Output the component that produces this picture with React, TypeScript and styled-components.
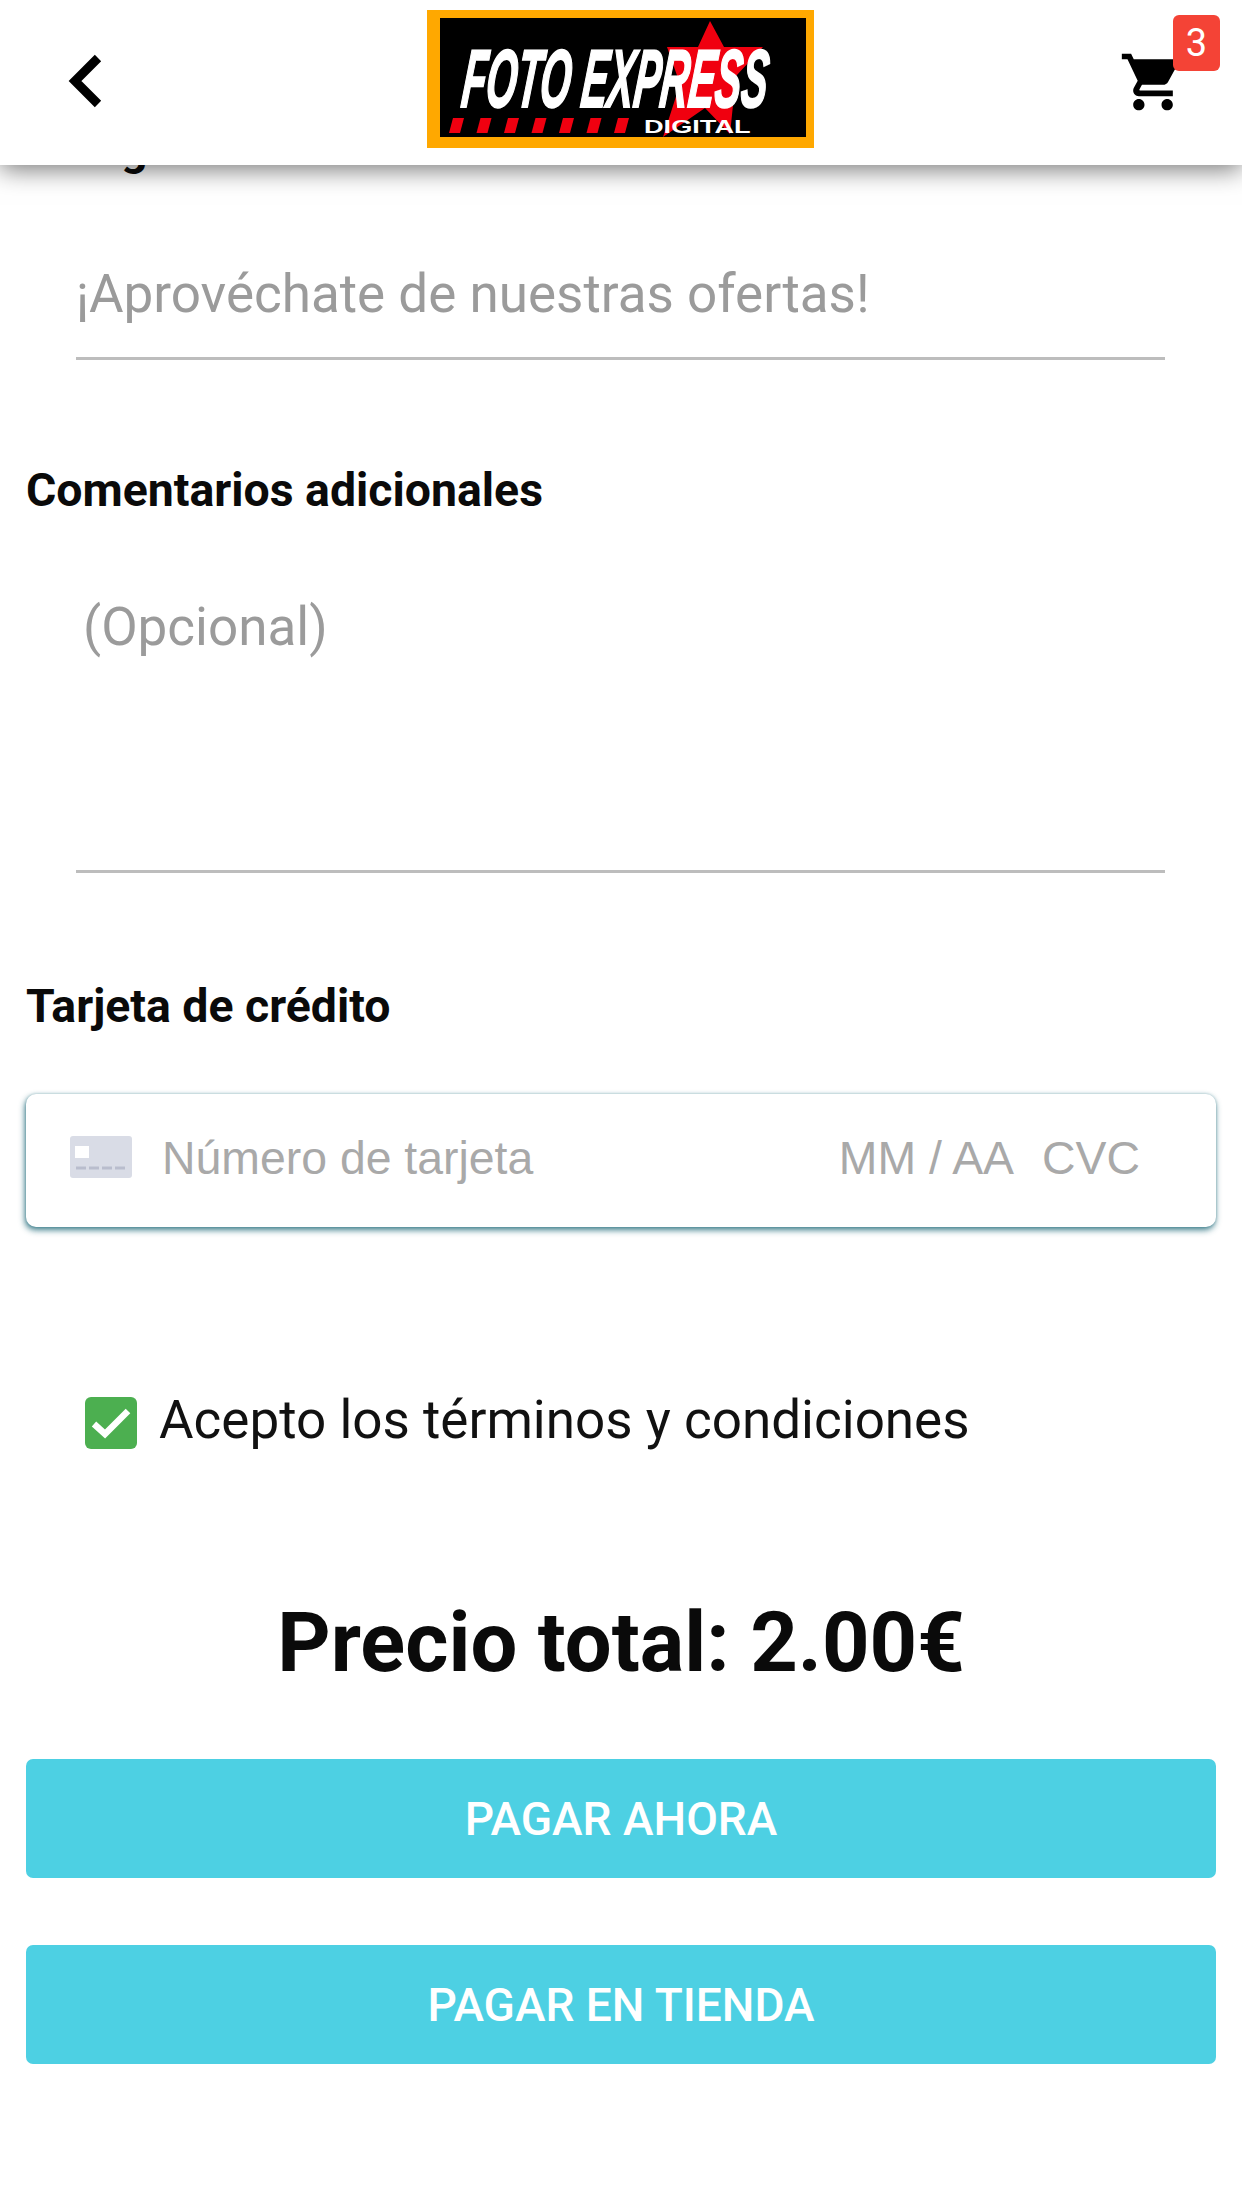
import React from 'react';
import styled, { createGlobalStyle } from 'styled-components';

const GlobalStyle = createGlobalStyle`
  html, body {
    margin: 0;
    padding: 0;
    background: #fff;
    font-family: Roboto, "Liberation Sans", sans-serif;
  }
`;

const Page = styled.div`
  position: relative;
  width: 1242px;
  height: 2208px;
  overflow: hidden;
  background: #fff;
`;

const Header = styled.header`
  position: absolute;
  top: 0;
  left: 0;
  right: 0;
  z-index: 2;
  height: 165px;
  background: #fff;
  box-shadow: 0 4px 24px rgba(0, 0, 0, 0.55);
  display: grid;
  grid-template-columns: 1fr 387px 1fr;
  align-items: center;
`;

const BackButton = styled.button`
  border: 0;
  background: none;
  padding: 0;
  width: 50px;
  height: 60px;
  margin: 0 0 4px 60px;
`;

const Logo = styled.div`
  height: 138px;
  margin: 0 1px 7px -1px;
  box-sizing: border-box;
  border: solid #ffa800;
  border-width: 8px 8px 11px 13px;
  background: #000;
  overflow: hidden;
`;

const CartButton = styled.div`
  position: relative;
  justify-self: end;
  width: 110px;
  height: 100px;
  margin-right: 22px;
`;

const CartBadge = styled.span`
  position: absolute;
  top: -18px;
  right: 0;
  width: 47px;
  height: 56px;
  border-radius: 6px;
  background: #f44336;
  color: #fff;
  font-size: 38px;
  display: flex;
  align-items: center;
  justify-content: center;
`;

const CartIcon = styled.svg`
  position: absolute;
  left: 9px;
  top: 15px;
  width: 68px;
  height: 68px;
`;

const Content = styled.main`
  padding: 122px 26px 0;
`;

const Label = styled.div<{ $top: number }>`
  margin-top: ${(p) => p.$top}px;
  font-size: 46.4px;
  font-weight: 700;
  line-height: 54px;
  color: #0a0a0a;
`;

const Field = styled.div<{ $height: number }>`
  box-sizing: border-box;
  height: ${(p) => p.$height}px;
  margin-left: 50px;
  width: 1089px;
  border-bottom: 3px solid #bdbdbd;
  color: #9b9b9b;
  font-size: 53px;
`;

const Placeholder = styled.div<{ $indent: number; $top: number }>`
  padding: ${(p) => p.$top}px 0 0 ${(p) => p.$indent}px;
  line-height: 56px;
`;

const CardInput = styled.div`
  box-sizing: border-box;
  height: 133px;
  margin-top: 61px;
  border-radius: 10px;
  background: #fff;
  box-shadow: -1px 3px 6px rgba(30, 105, 120, 0.85), 0 0 3px rgba(120, 170, 180, 0.6);
  display: flex;
  align-items: center;
  padding: 0 0 5px 44px;
  font-family: "Liberation Sans", Arial, sans-serif;
  font-size: 46.4px;
  color: #a9a9a9;
`;

const CardIcon = styled.svg`
  width: 62px;
  height: 42px;
  margin: 0 30px 3px 0;
  flex: none;
`;

const CardNumber = styled.span`
  flex: 1;
`;

const CardExpiry = styled.span`
  margin-right: 28px;
`;

const CardCvc = styled.span`
  margin-right: 76px;
`;

const TermsRow = styled.label`
  display: flex;
  gap: 22px;
  margin: 170px 0 0 59px;
  font-size: 53px;
  line-height: 47px;
  color: #111;
`;

const CheckBox = styled.span`
  width: 52px;
  height: 52px;
  border-radius: 6px;
  background: #4caf50;
  display: flex;
`;

const Total = styled.div`
  margin-top: 147px;
  text-align: center;
  font-size: 83px;
  font-weight: 700;
  line-height: 94px;
  color: #0a0a0a;
`;

const PayButton = styled.button<{ $gap: number }>`
  display: block;
  width: 100%;
  height: 119px;
  margin-top: ${(p) => p.$gap}px;
  border: 0;
  border-radius: 7px;
  background: #4dd0e3;
  color: #fff;
  font-family: inherit;
  font-size: 46px;
  font-weight: 500;
  text-transform: uppercase;
`;

// left edges of the red dashes under the logo name
const logoDashes = [0, 1, 2, 3, 4, 5, 6].map((i) => 9 + i * 27.5);

export default function App() {
  return (
    <Page>
      <GlobalStyle />
      <Header>
        <BackButton aria-label="Volver">
          <svg width="50" height="60" viewBox="0 0 50 60">
            <path d="M38 7 L15 30 L38 53" fill="none" stroke="#000" strokeWidth="9" />
          </svg>
        </BackButton>
        <Logo>
          <svg width="366" height="119" viewBox="0 0 366 119">
            <polygon
              points="270,3 284,29 323,29 296,58 290,116 265,90 223,119 240,66 227,29 258,29"
              fill="#f0000f"
            />
            <text
              transform="translate(20 89) skewX(-6) scale(0.48 1)"
              fontFamily="'Liberation Sans', Arial, sans-serif"
              fontWeight="700"
              fontStyle="italic"
              fontSize="82"
              fill="#fff"
              stroke="#fff"
              strokeWidth="2"
            >
              FOTO EXPRESS
            </text>
            <g fill="#f00010">
              {logoDashes.map((x) => (
                <polygon key={x} points={`${x + 4},100 ${x + 15},100 ${x + 11},115 ${x},115`} />
              ))}
            </g>
            <text
              transform="translate(204 115) scale(1.43 1)"
              fontFamily="'Liberation Sans', Arial, sans-serif"
              fontWeight="700"
              fontSize="19"
              fill="#fff"
            >
              DIGITAL
            </text>
          </svg>
        </Logo>
        <CartButton>
          <CartIcon viewBox="0 0 24 24">
            <path
              fill="#000"
              d="M7 18c-1.1 0-1.99.9-1.99 2S5.9 22 7 22s2-.9 2-2-.9-2-2-2zM1 2v2h2l3.6 7.59-1.35 2.45c-.16.28-.25.61-.25.96 0 1.1.9 2 2 2h12v-2H7.42c-.14 0-.25-.11-.25-.25l.03-.12.9-1.63h7.45c.75 0 1.41-.41 1.75-1.03l3.58-6.49c.08-.14.12-.31.12-.48 0-.55-.45-1-1-1H5.21l-.94-2H1zm16 16c-1.1 0-1.99.9-1.99 2s.89 2 1.99 2 2-.9 2-2-.9-2-2-2z"
            />
          </CartIcon>
          <CartBadge>3</CartBadge>
        </CartButton>
      </Header>
      <Content>
        <Label $top={0}>Código de descuento</Label>
        <Field $height={184}>
          <Placeholder $indent={0} $top={90}>
            ¡Aprovéchate de nuestras ofertas!
          </Placeholder>
        </Field>
        <Label $top={103}>Comentarios adicionales</Label>
        <Field $height={356}>
          <Placeholder $indent={7} $top={82}>
            (Opcional)
          </Placeholder>
        </Field>
        <Label $top={106}>Tarjeta de crédito</Label>
        <CardInput>
          <CardIcon viewBox="0 0 62 42">
            <rect x="0" y="0" width="62" height="42" rx="3" fill="#d9dce6" />
            <rect x="5" y="10" width="14" height="12" fill="#fff" />
            <path d="M6 32h50" stroke="#b9bdcd" strokeWidth="3" strokeDasharray="10 3" />
          </CardIcon>
          <CardNumber>Número de tarjeta</CardNumber>
          <CardExpiry>MM / AA</CardExpiry>
          <CardCvc>CVC</CardCvc>
        </CardInput>
        <TermsRow>
          <CheckBox>
            <svg width="52" height="52" viewBox="0 0 52 52">
              <path d="M9 27 L20 37 L43 14" fill="none" stroke="#fff" strokeWidth="6.5" />
            </svg>
          </CheckBox>
          <span>Acepto los términos y condiciones</span>
        </TermsRow>
        <Total>Precio total: 2.00€</Total>
        <PayButton $gap={69}>Pagar ahora</PayButton>
        <PayButton $gap={67}>Pagar en tienda</PayButton>
      </Content>
    </Page>
  );
}
